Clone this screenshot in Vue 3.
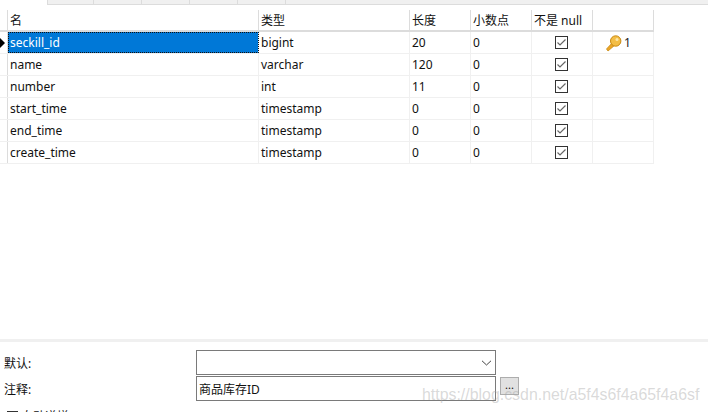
<template>
  <div class="page">
    <div class="tabs">
      <span v-for="n in 5" :key="n" class="tab"></span>
    </div>

    <div class="table">
      <div class="row head">
        <div class="marker"></div>
        <div v-for="h in headers" :key="h" class="cell">{{ h }}</div>
        <div class="cell"></div>
      </div>
      <div v-for="(f, i) in fields" :key="f.name" class="row">
        <div class="marker">
          <span v-if="i === 0" class="arrow"></span>
        </div>
        <div class="cell" :class="{ selected: i === 0 }">{{ f.name }}</div>
        <div class="cell">{{ f.type }}</div>
        <div class="cell">{{ f.length }}</div>
        <div class="cell">0</div>
        <div class="cell center">
          <svg width="13" height="13" viewBox="0 0 13 13">
            <rect x="0.5" y="0.5" width="12" height="12" fill="#fff" stroke="#333" />
            <path d="M2.5 6.5 L5 9 L10.5 3.5" fill="none" stroke="#666" stroke-width="1.2" />
          </svg>
        </div>
        <div class="cell key">
          <template v-if="i === 0">
            <svg width="17" height="18" viewBox="0 0 17 18">
              <path d="M1.5 15 L3 17 L10 11 L8 8 Z" fill="#eba526" stroke="#c98a12" stroke-width="0.8" />
              <circle cx="10.7" cy="7" r="5.2" fill="#f3bd45" stroke="#c98a12" />
              <circle cx="12" cy="5.5" r="1.5" fill="#fbe6a6" />
            </svg>
            <span>1</span>
          </template>
        </div>
      </div>
    </div>

    <div class="spacer"></div>

    <div class="props">
      <label class="prop-label">默认:</label>
      <div class="select">
        <svg width="11" height="6" viewBox="0 0 11 6">
          <path d="M1 0.8 L5.5 5 L10 0.8" fill="none" stroke="#444" stroke-width="1" />
        </svg>
      </div>
      <span></span>

      <label class="prop-label">注释:</label>
      <div class="input">商品库存ID</div>
      <button class="more">...</button>
    </div>

    <div class="auto">
      <span class="box">
        <svg width="9" height="9" viewBox="0 0 9 9">
          <path d="M1 4.5 L3.5 7 L8 2" fill="none" stroke="#555" stroke-width="1.1" />
        </svg>
      </span>
      <span>自动递增</span>
    </div>

    <div class="watermark">https://blog.csdn.net/a5f4s6f4a65f4a6sf</div>
  </div>
</template>

<script setup>
const headers = ['名', '类型', '长度', '小数点', '不是 null']

const fields = [
  { name: 'seckill_id', type: 'bigint', length: 20 },
  { name: 'name', type: 'varchar', length: 120 },
  { name: 'number', type: 'int', length: 11 },
  { name: 'start_time', type: 'timestamp', length: 0 },
  { name: 'end_time', type: 'timestamp', length: 0 },
  { name: 'create_time', type: 'timestamp', length: 0 }
]
</script>

<style>
html, body {
  margin: 0;
  background: #fff;
  overflow: hidden;
}
</style>

<style scoped>
.page {
  position: relative;
  width: 708px;
  height: 412px;
  overflow: hidden;
  background: #fff;
  color: #111;
  font-family: "Noto Sans", "Noto Sans CJK SC", sans-serif;
  font-size: 12px;
}

.tabs {
  display: flex;
  height: 4px;
  margin-left: 47px;
  margin-bottom: 5px;
  background: #f0f0f0;
  border-bottom: 1px solid #dcdcdc;
  border-left: 1px solid #dcdcdc;
}

.tab {
  width: 48px;
  flex: none;
  box-sizing: border-box;
  border-right: 1px solid #dcdcdc;
}

.tab:first-child {
  width: 46px;
}

.table {
  width: 654px;
}

.row {
  display: grid;
  grid-template-columns: 8px 251px 151px 61px 61px 61px 61px;
  height: 22px;
  box-sizing: border-box;
  border-bottom: 1px solid #f0f0f0;
}

.row.head {
  border-bottom: 2px solid #dcdcdc;
}

.marker {
  display: flex;
  align-items: center;
  border-right: 1px solid #dcdcdc;
}

.arrow {
  width: 0;
  height: 0;
  border-left: 5px solid #000;
  border-top: 5px solid transparent;
  border-bottom: 5px solid transparent;
}

.cell {
  display: flex;
  align-items: center;
  padding-left: 2px;
  box-sizing: border-box;
  border-right: 1px solid #f0f0f0;
  white-space: nowrap;
  overflow: hidden;
}

.head .cell {
  border-right: 1px solid #dcdcdc;
}

.selected {
  background: #0078d7;
  color: #fff;
  outline: 1px dotted #111;
  outline-offset: -1px;
}

.center {
  justify-content: center;
  padding: 0 1px 0 0;
}

.key {
  padding-left: 12px;
  gap: 2px;
  color: #222;
}

.spacer {
  height: 175px;
}

.props {
  display: grid;
  grid-template-columns: 192px 300px 23px;
  grid-auto-rows: 25px;
  row-gap: 1px;
  align-items: center;
  padding: 8px 0 0 4px;
  border-top: 3px solid #f0f0f0;
}

.prop-label {
  color: #111;
}

.select,
.input {
  height: 25px;
  box-sizing: border-box;
  border: 1px solid #7a7a7a;
  display: flex;
  align-items: center;
}

.select {
  justify-content: flex-end;
  padding-right: 3px;
}

.input {
  padding-left: 2px;
}

.more {
  justify-self: end;
  align-self: start;
  width: 19px;
  height: 18px;
  padding: 0 0 2px;
  margin-top: 1px;
  background: #e1e1e1;
  border: 1px solid #adadad;
  font: 11px/12px "Noto Sans", sans-serif;
  color: #111;
}

.auto {
  display: flex;
  align-items: center;
  gap: 3px;
  margin: 6px 0 0 7px;
}

.box {
  width: 11px;
  height: 11px;
  box-sizing: border-box;
  border: 1px solid #333;
  display: flex;
}

.watermark {
  position: absolute;
  left: 422px;
  top: 386px;
  font-family: "Liberation Sans", sans-serif;
  font-size: 15.9px;
  color: rgba(165, 165, 165, 0.42);
  white-space: nowrap;
}
</style>
